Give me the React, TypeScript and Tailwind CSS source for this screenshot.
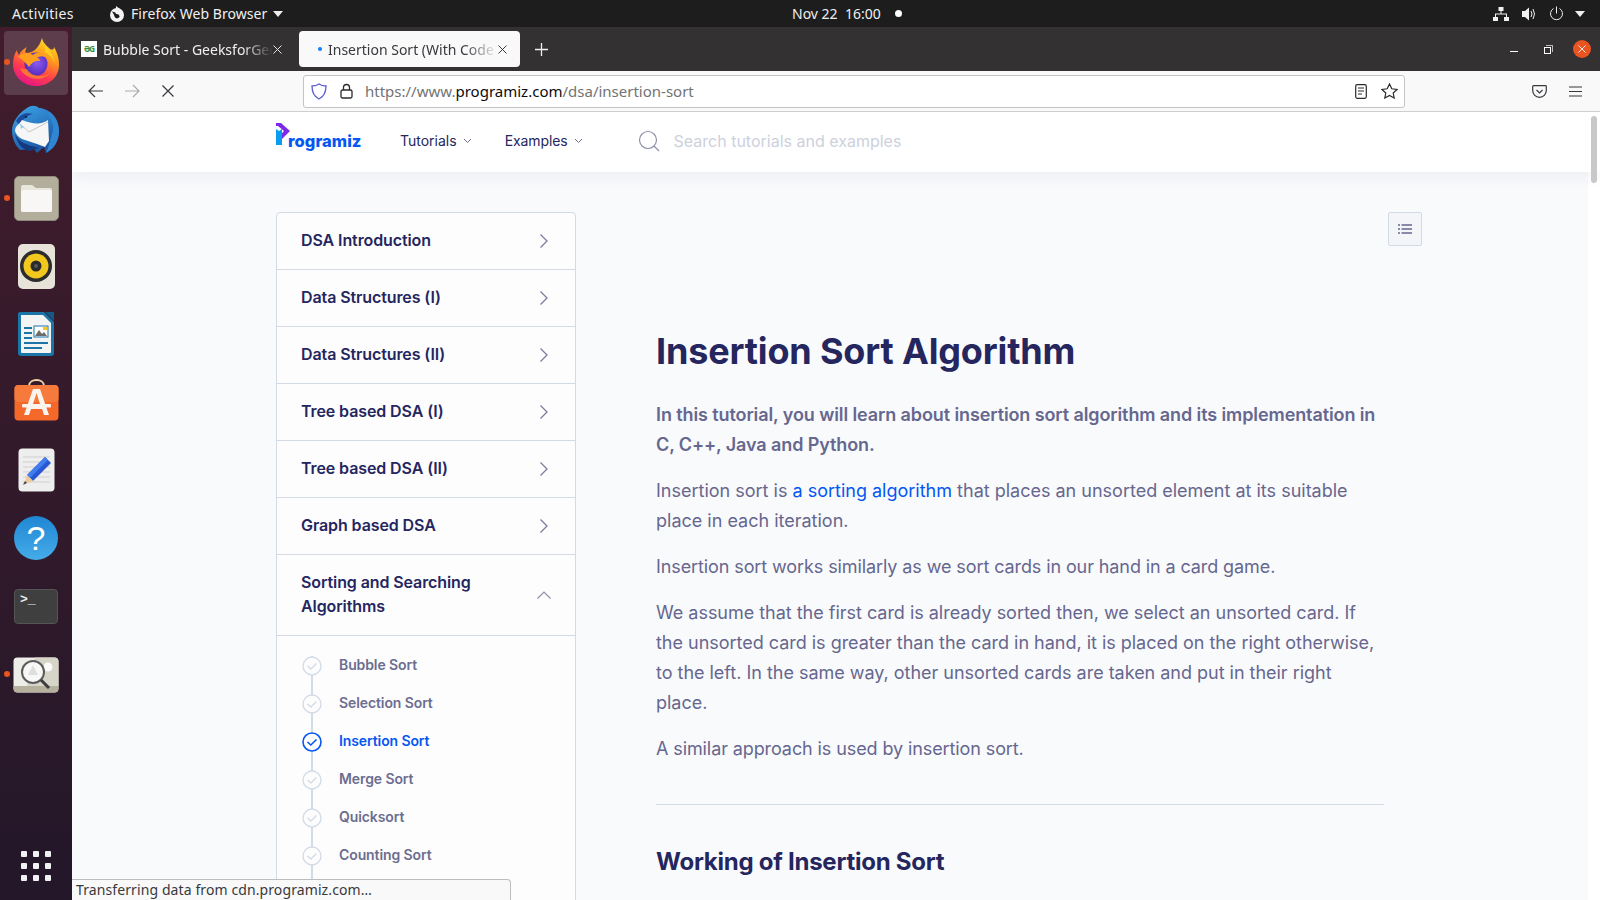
import React from "react";

const ui = "font-['Noto_Sans','Open_Sans',sans-serif]";
const site = "font-['Inter','Lato',sans-serif]";

function ChevronRight() {
  return (
    <svg width="12" height="16" viewBox="0 0 12 16" fill="none" stroke="#7c7d9c" strokeWidth="1.3" className="shrink-0">
      <path d="M2.5 1.5 L9 8 L2.5 14.5" />
    </svg>
  );
}
function Small({ className = "" }: { className?: string }) {
  return (
    <svg width="9" height="6" viewBox="0 0 9 6" fill="none" stroke="#6b6c8e" strokeWidth="1" className={className}>
      <path d="M1 1 L4.5 4.5 L8 1" />
    </svg>
  );
}

function Firefox() {
  return (
    <svg width="48" height="50" viewBox="0 0 48 50">
      <defs>
        <linearGradient id="ff1" x1="0.75" y1="0" x2="0.3" y2="1">
          <stop offset="0" stopColor="#ffe226" />
          <stop offset="0.35" stopColor="#ff9a1c" />
          <stop offset="0.7" stopColor="#ff3a50" />
          <stop offset="1" stopColor="#e31587" />
        </linearGradient>
        <radialGradient id="ff2" cx="0.55" cy="0.45" r="0.6">
          <stop offset="0" stopColor="#8a5cf0" />
          <stop offset="1" stopColor="#5128b8" />
        </radialGradient>
      </defs>
      <path d="M30 1 C31 6 35 9 38 12 C40 13 42 13 42 10 C46 17 47 22 47 28 C47 40 37 49 24 49 C11 49 1 39 1 27 C1 22 2 17 5 13 C5 15 6 17 7 18 C8 15 11 12 15 10 C13 13 13 15 14 16 C20 16 27 12 30 1 Z" fill="url(#ff1)" />
      <circle cx="24" cy="27" r="11.5" fill="url(#ff2)" />
      <path d="M6 20 C10 15 17 15 21 18 C25 14 33 15 36 22 C32 18 27 19 25 21 C27 21 28 23 28 24 C24 23 20 25 17 30 C14 26 10 22 6 20 Z" fill="#ff9f1f" />
      <path d="M31 4 C34 10 41 15 43 28 C41 21 38 18 33 15 C34 11 33 7 31 4Z" fill="#ffcf22" />
      <path d="M8 31 C12 42 30 46 38 36 C31 41 19 40 15 32 C12 32 10 32 8 31Z" fill="#ff8a2a" opacity="0.75" />
    </svg>
  );
}
function Thunderbird() {
  return (
    <svg width="48" height="50" viewBox="0 0 48 50">
      <defs>
        <linearGradient id="tb1" x1="0.2" y1="0" x2="0.7" y2="1">
          <stop offset="0" stopColor="#3aa0e4" />
          <stop offset="1" stopColor="#1a4f9c" />
        </linearGradient>
      </defs>
      <path d="M15 3 C19 0 24 0 27 3 C38 4 47 13 47 26 C47 36 42 44 34 48 L32 42 L25 48 L22 44 L8 45 C3 40 0 33 0 26 C0 17 6 9 15 3 Z" fill="url(#tb1)" />
      <path d="M27 3 C35 8 42 15 41 25 L37 40 L34 48 C42 44 47 36 47 26 C47 13 38 4 27 3 Z" fill="#2f86d2" />
      <path d="M4 16 C8 9 14 7 21 9 C16 10 13 13 10 16 L7 19 Z" fill="#1a4a98" />
      <circle cx="14" cy="12" r="1.1" fill="#0b1f44" />
      <path d="M7 19 L10 15 C20 19 30 20 36 15 L37 36 L33 42 L25 39 L10 34 C6 32 4 29 3 26 C3 23 4 21 7 19 Z" fill="#f6f6f6" />
      <path d="M8 19 L17 27 L36 17" fill="none" stroke="#b9b9b9" strokeWidth="0.8" />
      <path d="M3 29 C7 37 14 40 27 43 L18 46 C10 45 5 38 3 29Z" fill="#153a80" />
      <path d="M8 19 L12 22 L9 24 Z" fill="#8dd0ea" />
    </svg>
  );
}
function Files() {
  return (
    <div className="w-[45px] h-[45px] rounded-[5px] bg-[#b3ad9c] border border-[#8f8a7b] flex items-center justify-center">
      <svg width="33" height="29" viewBox="0 0 33 29">
        <path d="M1 3 Q1 1 3 1 H12 L16 4 H30 Q32 4 32 6 V26 Q32 28 30 28 H3 Q1 28 1 26 Z" fill="#e8e5dc" />
        <path d="M1 8 Q1 6 3 6 H30 Q32 6 32 8 V26 Q32 28 30 28 H3 Q1 28 1 26 Z" fill="#f8f7f5" />
      </svg>
    </div>
  );
}
function Rhythmbox() {
  return (
    <div className="w-[37px] h-[45px] rounded-[5px] bg-[#e7e3d9] flex items-center justify-center">
      <svg width="34" height="34" viewBox="0 0 34 34">
        <circle cx="17" cy="17" r="16" fill="#2c2c2c" />
        <circle cx="17" cy="17" r="12.5" fill="#f2c81e" />
        <circle cx="17" cy="17" r="5.5" fill="#2a2a2a" />
        <circle cx="17" cy="17" r="2" fill="#555" />
      </svg>
    </div>
  );
}
function Writer() {
  return (
    <svg width="38" height="46" viewBox="0 0 38 46">
      <path d="M3 1 H27 L37 11 V42 Q37 45 34 45 H4 Q1 45 1 42 V3 Q1 1 3 1Z" fill="#1b75a8" />
      <path d="M4 4 H26 L34 12 V41 Q34 42 33 42 H5 Q4 42 4 41 Z" fill="#f3f4f4" />
      <path d="M28 1 L37 1 V10 Z" fill="#135b85" />
      <rect x="7" y="16" width="8" height="2" fill="#1b75a8" />
      <rect x="7" y="21" width="8" height="2" fill="#1b75a8" />
      <rect x="7" y="26" width="8" height="2" fill="#1b75a8" />
      <rect x="7" y="31" width="24" height="2" fill="#1b75a8" />
      <rect x="7" y="36" width="18" height="2" fill="#1b75a8" />
      <rect x="17" y="15" width="14" height="11" fill="#fff" stroke="#1b75a8" />
      <path d="M18 25 L22 19 L25 23 L27 21 L30 25Z" fill="#6b6b6b" />
      <rect x="26" y="16" width="4" height="3" fill="#f2c81e" />
    </svg>
  );
}
function Software() {
  return (
    <svg width="45" height="42" viewBox="0 0 45 42" className="mt-[-4px]">
      <path d="M15 7 C15 -1 30 -1 30 7" fill="none" stroke="#f2d3ab" strokeWidth="2" />
      <rect x="0.5" y="6" width="44" height="35.5" rx="4" fill="#f4682a" />
      <rect x="0.5" y="6" width="44" height="17" rx="4" fill="#f57a3c" />
      <path d="M19 10 H26 L35 36 H30 L28 30 H17 L15 36 H10 Z M19 25 H26 L22.5 14 Z" fill="#fbf3ee" />
      <rect x="8" y="25" width="29" height="3.5" rx="1" fill="#fbf3ee" />
    </svg>
  );
}
function TextEditor() {
  return (
    <svg width="37" height="44" viewBox="0 0 37 44">
      <rect x="0.5" y="0.5" width="36" height="43" rx="4" fill="#eeeeee" />
      <g stroke="#cfcfcf" strokeWidth="1">
        <path d="M5 9 H32 M5 14 H32 M5 19 H32 M5 24 H32 M5 29 H32 M5 34 H32" />
      </g>
      <path d="M27 9 L33 15 L15 33 L9 27 Z" fill="#2a58d0" />
      <path d="M27 9 L30 12 L12 30 L9 27 Z" fill="#3f7df0" />
      <path d="M9 27 L15 33 L6 36 Z" fill="#eccb9b" />
      <path d="M7 33 L9 35 L5 37 Z" fill="#444" />
    </svg>
  );
}
function Help() {
  return (
    <div className="w-[44px] h-[44px] rounded-full bg-gradient-to-b from-[#1f86d3] to-[#45ace9] flex items-center justify-center text-white text-[34px] leading-none font-['Liberation_Sans',sans-serif]">
      ?
    </div>
  );
}
function Terminal() {
  return (
    <div className="w-[44px] h-[35px] rounded-[4px] bg-[#3f3f3f] border border-[#555] relative">
      <span className="pl-[5px] pt-[2px] block text-[#ececec] text-[13px] leading-[16px] font-['Liberation_Mono',monospace] font-bold">&gt;_</span>
    </div>
  );
}
function Magnifier() {
  return (
    <svg width="46" height="36" viewBox="0 0 46 36" className="mt-[2px]">
      <rect x="0.5" y="0.5" width="45" height="35" rx="4" fill="#eeeee8" />
      <path d="M0.5 29 H45.5 V31 Q45.5 35.5 41 35.5 H5 Q0.5 35.5 0.5 31 Z" fill="#b6b09e" />
      <path d="M22 0.5 H41 Q45.5 0.5 45.5 5 V29 H14 Z" fill="#d7d5c8" />
      <circle cx="35" cy="10" r="4.5" fill="#fafafa" />
      <circle cx="20" cy="15" r="11" fill="#f8f8f6" stroke="#5c5c5c" strokeWidth="2" />
      <path d="M15 18 L20 8 L25 18 Z" fill="#dedede" />
      <path d="M28 23 L36 31" stroke="#3b3b3b" strokeWidth="3" />
    </svg>
  );
}

const dockItems = [
  { icon: <Firefox />, dot: true, active: true },
  { icon: <Thunderbird /> },
  { icon: <Files />, dot: true },
  { icon: <Rhythmbox /> },
  { icon: <Writer /> },
  { icon: <Software /> },
  { icon: <TextEditor /> },
  { icon: <Help /> },
  { icon: <Terminal /> },
  { icon: <Magnifier />, dot: true },
];

function Dock() {
  return (
    <div className="w-[72px] shrink-0 flex flex-col items-center bg-gradient-to-b from-[#421c2c] to-[#231729] pt-[1px] pb-[19px]">
      {dockItems.map((d, i) => (
        <div key={i} className="relative h-[68px] w-[72px] flex items-center justify-center shrink-0">
          {d.active && <div className="absolute left-[4px] top-[3px] w-[64px] h-[64px] rounded-[4px] bg-white/15" />}
          {d.dot && <div className="absolute left-[4px] top-[31px] w-[6px] h-[6px] rounded-full bg-[#e9541f]" />}
          <div className="relative flex">{d.icon}</div>
        </div>
      ))}
      <div className="mt-auto grid grid-cols-3 gap-[6px] mr-[1px]">
        {Array.from({ length: 9 }).map((_, i) => (
          <div key={i} className="w-[6px] h-[6px] rounded-[1px] bg-[#f2f2f2]" />
        ))}
      </div>
    </div>
  );
}

function TopBar() {
  return (
    <div className={`h-[27px] shrink-0 bg-[#1d1d1d] text-[#f0f0f0] text-[14px] flex items-center relative ${ui}`}>
      <span className="ml-[12px] w-[97px] tracking-[0.35px]">Activities</span>
      <svg width="16" height="16" viewBox="0 0 16 16" className="mr-[6px]">
        <circle cx="8" cy="9" r="7" fill="#f3f3f3" />
        <path d="M3 5.5 C6 6 7 7 7 8 C9 7.5 11 9 10.5 11 C9 13 6 12.5 5.5 10.5 C5 8.5 4 7 3 5.5 Z" fill="#1d1d1d" />
        <path d="M7 0 L11 3 L7 4.5 Z" fill="#f3f3f3" />
      </svg>
      <span className="tracking-[0.05px]">Firefox Web Browser</span>
      <svg width="10" height="6" viewBox="0 0 10 6" className="ml-[6px]"><path d="M0 0 H10 L5 6Z" fill="#f0f0f0" /></svg>
      <div className="absolute left-[792px] top-0 h-[27px] flex items-center gap-[14px]">
        <span>Nov 22&nbsp; 16:00</span>
        <span className="w-[7px] h-[7px] rounded-full bg-white" />
      </div>
      <div className="ml-auto flex items-center pr-[15px]">
        <svg width="16" height="14" viewBox="0 0 16 14" fill="#f0f0f0">
          <rect x="5.5" y="0" width="5" height="4" />
          <rect x="0" y="10" width="5" height="4" />
          <rect x="11" y="10" width="5" height="4" />
          <path d="M7.5 4 H8.5 V6.5 H14 V10 H13 V7.5 H3 V10 H2 V6.5 H7.5 Z" />
        </svg>
        <svg width="15" height="14" viewBox="0 0 15 14" fill="#f0f0f0" className="ml-[13px]">
          <path d="M0 4 H3 L7 0.5 V13.5 L3 10 H0 Z" />
          <path d="M9 4 Q11 7 9 10 M11 2 Q14 7 11 12" fill="none" stroke="#f0f0f0" strokeWidth="1" />
        </svg>
        <svg width="15" height="15" viewBox="0 0 15 15" fill="none" stroke="#f0f0f0" strokeWidth="1" className="ml-[12px]">
          <path d="M7.5 0.5 V7.5" />
          <path d="M4.5 2.5 A6 6 0 1 0 10.5 2.5" />
        </svg>
        <svg width="10" height="6" viewBox="0 0 10 6" className="ml-[11px]"><path d="M0 0 H10 L5 6Z" fill="#f0f0f0" /></svg>
      </div>
    </div>
  );
}

function XIcon({ color = "#e6e6e6", size = 9 }: { color?: string; size?: number }) {
  return (
    <svg width={size} height={size} viewBox="0 0 9 9" stroke={color} strokeWidth="1" fill="none" className="shrink-0">
      <path d="M0.5 0.5 L8.5 8.5 M8.5 0.5 L0.5 8.5" />
    </svg>
  );
}

function TabBar() {
  return (
    <div className={`h-[44px] shrink-0 bg-[#333131] flex items-center text-[14px] ${ui}`}>
      <div className="w-[226px] h-[36px] flex items-center pl-[9px] shrink-0">
        <div className="w-[16px] h-[16px] bg-white flex items-center justify-center shrink-0">
          <span className="text-[8px] leading-none font-bold text-[#2f8d46] tracking-[-1px]">ƏG</span>
        </div>
        <span className="ml-[6px] w-[170px] whitespace-nowrap overflow-hidden text-[#f0f0f0] [mask-image:linear-gradient(to_right,black_82%,transparent)]">Bubble Sort - GeeksforGeeks</span>
        <XIcon />
      </div>
      <div className="w-[221px] h-[36px] bg-[#f9f9fa] rounded-[4px] ml-[1px] flex items-center pl-[19px] shrink-0">
        <span className="w-[4px] h-[4px] rounded-full bg-[#0a84ff] shrink-0" />
        <span className="ml-[6px] w-[170px] whitespace-nowrap overflow-hidden text-[#38383d] [mask-image:linear-gradient(to_right,black_80%,transparent)]">Insertion Sort (With Code in Python)</span>
        <XIcon color="#38383d" />
      </div>
      <svg width="13" height="13" viewBox="0 0 13 13" stroke="#f0f0f0" strokeWidth="1.3" className="ml-[15px]">
        <path d="M6.5 0 V13 M0 6.5 H13" />
      </svg>
      <div className="ml-auto flex items-center">
        <div className="w-[8px] h-[1px] bg-white mt-[4px]" />
        <div className="ml-[26px] w-[9px] h-[9px] relative">
          <div className="absolute left-0 bottom-0 w-[7px] h-[7px] border border-white" />
          <div className="absolute right-0 top-0 w-[7px] h-[7px] border-t border-r border-[#bbb]" />
        </div>
        <div className="ml-[20px] mr-[9px] w-[18px] h-[18px] rounded-full bg-[#e95420] flex items-center justify-center">
          <XIcon color="#ffffff" size={8} />
        </div>
      </div>
    </div>
  );
}

function ToolBar() {
  return (
    <div className={`h-[41px] shrink-0 bg-[#f9f9fa] border-b border-[#cfcfcf] flex items-center ${ui}`}>
      <svg width="16" height="14" viewBox="0 0 16 14" fill="none" stroke="#38383d" strokeWidth="1.2" className="ml-[16px]">
        <path d="M15 7 H1 M7 1 L1 7 L7 13" />
      </svg>
      <svg width="16" height="14" viewBox="0 0 16 14" fill="none" stroke="#ababae" strokeWidth="1.2" className="ml-[20px]">
        <path d="M1 7 H15 M9 1 L15 7 L9 13" />
      </svg>
      <svg width="12" height="12" viewBox="0 0 12 12" fill="none" stroke="#38383d" strokeWidth="1.2" className="ml-[22px]">
        <path d="M0.5 0.5 L11.5 11.5 M11.5 0.5 L0.5 11.5" />
      </svg>
      <div className="ml-[129px] w-[1102px] h-[33px] bg-white border border-[#c4c4c4] rounded-[3px] flex items-center shrink-0">
        <svg width="16" height="17" viewBox="0 0 16 17" fill="none" stroke="#5b5bd6" strokeWidth="1.3" className="ml-[7px]">
          <path d="M8 1 C10 2.5 12 3 15 3 C15 9 13 13.5 8 16 C3 13.5 1 9 1 3 C4 3 6 2.5 8 1Z" />
        </svg>
        <svg width="13" height="16" viewBox="0 0 13 16" fill="none" stroke="#2a2a2e" strokeWidth="1.3" className="ml-[13px]">
          <rect x="1" y="7" width="11" height="8" rx="1.5" />
          <path d="M3.5 7 V4.5 A3 3 0 0 1 9.5 4.5 V7" />
        </svg>
        <span className="ml-[12px] text-[15px] text-[#737373] whitespace-nowrap">
          https://www.<span className="text-[#0c0c0d]">programiz.com</span>/dsa/insertion-sort
        </span>
        <svg width="12" height="15" viewBox="0 0 12 15" fill="none" stroke="#2a2a2e" strokeWidth="1.2" className="ml-auto">
          <rect x="0.7" y="0.7" width="10.6" height="13.6" rx="1.5" />
          <path d="M3 4 H9 M3 7 H9 M3 10 H7" />
        </svg>
        <svg width="17" height="16" viewBox="0 0 17 16" fill="none" stroke="#2a2a2e" strokeWidth="1.2" className="ml-[14px] mr-[6px]">
          <path d="M8.5 1 L10.8 5.8 L16 6.5 L12.2 10 L13.2 15 L8.5 12.5 L3.8 15 L4.8 10 L1 6.5 L6.2 5.8 Z" />
        </svg>
      </div>
      <svg width="15" height="13" viewBox="0 0 15 13" fill="none" stroke="#38383d" strokeWidth="1.2" className="ml-[127px]">
        <path d="M1.5 0.7 H13.5 Q14.3 0.7 14.3 1.5 V5.5 A6.8 6.8 0 0 1 0.7 5.5 V1.5 Q0.7 0.7 1.5 0.7 Z" />
        <path d="M4.5 5 L7.5 8 L10.5 5" />
      </svg>
      <svg width="13" height="11" viewBox="0 0 13 11" stroke="#38383d" strokeWidth="1.2" className="ml-[22px]">
        <path d="M0 1 H13 M0 5.5 H13 M0 10 H13" />
      </svg>
    </div>
  );
}

const sections = ["DSA Introduction", "Data Structures (I)", "Data Structures (II)", "Tree based DSA (I)", "Tree based DSA (II)", "Graph based DSA"];
const lessons = ["Bubble Sort", "Selection Sort", "Insertion Sort", "Merge Sort", "Quicksort", "Counting Sort"];

function CheckCircle({ active }: { active: boolean }) {
  const c = active ? "#0556f3" : "#d3dce6";
  return (
    <svg width="20" height="20" viewBox="0 0 20 20" fill="#fdfdfe" stroke={c} strokeWidth={active ? 1.6 : 1.4} className="relative shrink-0">
      <circle cx="10" cy="10" r="9" />
      <path d="M5.5 10 L8.8 13 L14.5 7.5" fill="none" />
    </svg>
  );
}

function Sidebar() {
  return (
    <div className="w-[300px] shrink-0 border border-[#d3dce6] rounded-t-[4px] bg-[#fdfdfe] self-start">
      {sections.map((s) => (
        <div key={s} className="h-[57px] border-b border-[#d3dce6] flex items-center justify-between pl-[24px] pr-[25px] text-[16px] font-semibold text-[#25265e] tracking-[-0.1px]">
          <span className="pb-[2px]">{s}</span>
          <ChevronRight />
        </div>
      ))}
      <div className="h-[81px] border-b border-[#d3dce6] flex items-center justify-between pl-[24px] pr-[23px] text-[16px] font-semibold text-[#25265e] leading-[24px] tracking-[-0.1px]">
        <span className="w-[200px] pb-[2px]">Sorting and Searching Algorithms</span>
        <svg width="16" height="10" viewBox="0 0 16 10" fill="none" stroke="#8e8fa8" strokeWidth="1.2"><path d="M1.5 8.5 L8 2 L14.5 8.5" /></svg>
      </div>
      <div className="pt-[11px] pl-[25px] pb-[40px] relative">
        <div className="absolute left-[34px] top-[20px] bottom-0 w-[2px] bg-[#d3dce6]" />
        {lessons.map((l, i) => (
          <div key={l} className="h-[38px] flex items-center relative">
            <CheckCircle active={i === 2} />
            <span className={`ml-[17px] pb-[3px] text-[14px] font-semibold tracking-[-0.1px] ${i === 2 ? "text-[#0556f3]" : "text-[#6c6d8f]"}`}>{l}</span>
          </div>
        ))}
      </div>
    </div>
  );
}

function Article() {
  return (
    <div className="ml-[80px] w-[728px] shrink-0 text-[18px] leading-[30px] text-[#66678f] relative tracking-[-0.1px]">
      <div className="absolute right-[-38px] top-0 w-[34px] h-[34px] border border-[#d3dce6] rounded-[2px] bg-[#f4f5f8] flex items-center justify-center">
        <svg width="14" height="10" viewBox="0 0 14 10" stroke="#66678f" strokeWidth="1.5">
          <path d="M0 1 H2 M3.5 1 H14 M0 5 H2 M3.5 5 H14 M0 9 H2 M3.5 9 H14" />
        </svg>
      </div>
      <h1 className="mt-[113px] text-[36px] leading-[52px] font-bold text-[#25265e] whitespace-nowrap tracking-[-0.15px]">Insertion Sort Algorithm</h1>
      <p className="mt-[23px] font-semibold">In this tutorial, you will learn about insertion sort algorithm and its implementation in C, C++, Java and Python.</p>
      <p className="mt-[16px] tracking-[0px]">Insertion sort is <span className="text-[#0556f3]">a sorting algorithm</span> that places an unsorted element at its suitable place in each iteration.</p>
      <p className="mt-[16px]">Insertion sort works similarly as we sort cards in our hand in a card game.</p>
      <p className="mt-[16px] max-w-[724px] tracking-[-0.02px]">We assume that the first card is already sorted then, we select an unsorted card. If the unsorted card is greater than the card in hand, it is placed on the right otherwise, to the left. In the same way, other unsorted cards are taken and put in their right place.</p>
      <p className="mt-[16px]">A similar approach is used by insertion sort.</p>
      <hr className="mt-[40px] border-[#d3dce6]" />
      <h2 className="mt-[40px] text-[24px] leading-[34px] font-bold text-[#25265e] tracking-[-0.25px]">Working of Insertion Sort</h2>
    </div>
  );
}

function Page() {
  return (
    <div className={`flex-1 relative overflow-hidden bg-white ${site}`}>
      <div className="h-[60px] bg-white shadow-[0_4px_16px_rgba(37,38,94,0.06)] relative flex items-center pl-[204px] pb-[3px]">
        <div className="flex items-end w-[124px] shrink-0 pb-[7px]">
          <svg width="15" height="26" viewBox="0 0 15 26" className="mb-[2px] shrink-0">
            <path d="M0 0 H5 L14 8 L6 16 H1 L8 8 L2 3 H0 Z" fill="#7c2ae8" />
            <path d="M0 6 L3 8 L6 6 V22 H0 Z" fill="#0a9cf0" />
          </svg>
          <span className="text-[#0556f3] text-[16.5px] leading-[20px] font-extrabold tracking-[0.05px] ml-[-3px]">rogramiz</span>
        </div>
        <span className="text-[14px] text-[#25265e]">Tutorials</span>
        <Small className="ml-[6px]" />
        <span className="ml-[33px] text-[14px] text-[#25265e] tracking-[-0.1px]">Examples</span>
        <Small className="ml-[6px]" />
        <svg width="22" height="22" viewBox="0 0 22 22" fill="none" stroke="#8f90a8" strokeWidth="1.2" className="ml-[55px]">
          <circle cx="10" cy="10" r="8.5" />
          <path d="M16 16 L21 21" />
        </svg>
        <span className="ml-[14px] text-[16px] text-[#ccd1dc]">Search tutorials and examples</span>
      </div>
      <div className="h-[728px] mr-[12px] bg-[#f9fafc] pl-[204px] pt-[40px] flex">
        <Sidebar />
        <Article />
      </div>
      <div className="absolute right-[3px] top-[4px] w-[6px] h-[67px] rounded-full bg-[#c8c8c8]" />
      <div className={`absolute left-0 bottom-0 w-[439px] h-[21px] bg-[#f9f9fa] border-t border-r border-[#bdbdbd] rounded-tr-[4px] pl-[4px] text-[14px] leading-[20px] text-[#38383d] whitespace-nowrap tracking-[0.1px] ${ui}`}>
        Transferring data from cdn.programiz.com…
      </div>
    </div>
  );
}

export default function App() {
  return (
    <div className="w-[1600px] h-[900px] overflow-hidden flex flex-col">
      <TopBar />
      <div className="flex-1 flex min-h-0">
        <Dock />
        <div className="flex-1 flex flex-col min-w-0">
          <TabBar />
          <ToolBar />
          <Page />
        </div>
      </div>
    </div>
  );
}
